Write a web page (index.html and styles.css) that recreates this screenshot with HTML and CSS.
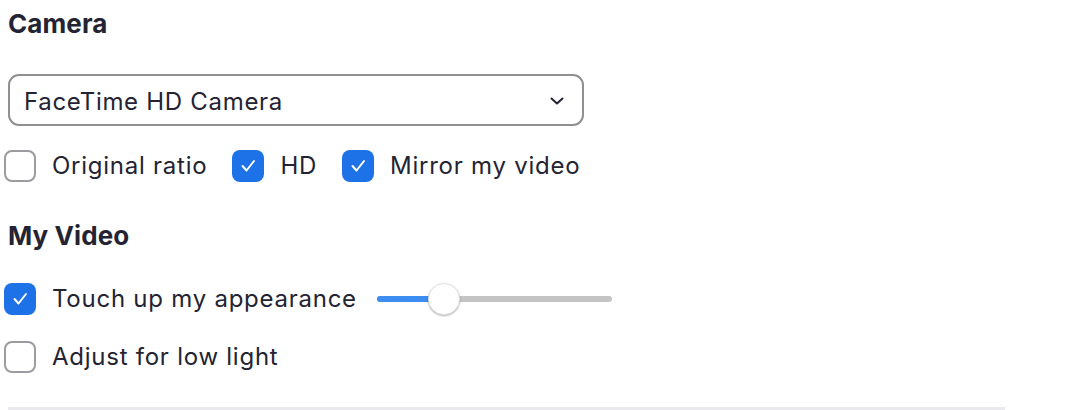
FILE: index.html
```html
<!DOCTYPE html>
<html lang="en">
<head>
  <meta charset="UTF-8" />
  <title>Video Settings</title>
  <link rel="stylesheet" href="styles.css">
</head>
<body>

  <div class="settings">
    <h2 class="section-title">Camera</h2>

    <div class="select">
      <span class="select-value">FaceTime HD Camera</span>
      <svg class="chevron" width="14" height="8" viewBox="0 0 14 8">
        <path d="M1.5 1.5 L7 6.5 L12.5 1.5" fill="none" stroke="#232333" stroke-width="2" stroke-linecap="round" stroke-linejoin="round"/>
      </svg>
    </div>

    <div class="check-row">
      <label class="check">
        <span class="box"></span>
        <span class="check-label">Original ratio</span>
      </label>
      <label class="check">
        <span class="box checked">
          <svg width="32" height="32" viewBox="0 0 32 32"><path d="M10.5 16 L14.5 20.5 L22 11" fill="none" stroke="#fff" stroke-width="2" stroke-linecap="round" stroke-linejoin="round"/></svg>
        </span>
        <span class="check-label">HD</span>
      </label>
      <label class="check">
        <span class="box checked">
          <svg width="32" height="32" viewBox="0 0 32 32"><path d="M10.5 16 L14.5 20.5 L22 11" fill="none" stroke="#fff" stroke-width="2" stroke-linecap="round" stroke-linejoin="round"/></svg>
        </span>
        <span class="check-label">Mirror my video</span>
      </label>
    </div>

    <h2 class="section-title my-video">My Video</h2>

    <div class="check-row touch-row">
      <label class="check">
        <span class="box checked">
          <svg width="32" height="32" viewBox="0 0 32 32"><path d="M10.5 16 L14.5 20.5 L22 11" fill="none" stroke="#fff" stroke-width="2" stroke-linecap="round" stroke-linejoin="round"/></svg>
        </span>
        <span class="check-label">Touch up my appearance</span>
      </label>
      <div class="slider">
        <div class="slider-fill" style="width: 28.5%"></div>
        <div class="slider-thumb" style="left: 28.5%"></div>
      </div>
    </div>

    <div class="check-row low-light-row">
      <label class="check">
        <span class="box"></span>
        <span class="check-label">Adjust for low light</span>
      </label>
    </div>

    <div class="divider"></div>
  </div>

</body>
</html>
```

FILE: styles.css
```css
body {
  margin: 0;
  background-color: #fff;
  color: #232333;
  font-family: Inter, 'Liberation Sans', sans-serif;
}

.settings {
  padding: 8px 0 0 8px;
}

.section-title {
  margin: 0;
  font-size: 26px;
  font-weight: 700;
  line-height: 32px;
  letter-spacing: 0.1px;
  color: #232333;
}

.select {
  margin-top: 34px;
  width: 576px;
  height: 52px;
  box-sizing: border-box;
  border: 2px solid #8f8f94;
  border-radius: 11px;
  padding: 2px 18px 0 14px;
  display: flex;
  align-items: center;
  justify-content: space-between;
}

.select-value {
  font-size: 24px;
  letter-spacing: 0.7px;
}

.check-row {
  margin-top: 24px;
  margin-left: -4px;
  display: flex;
  align-items: center;
  gap: 25px;
  height: 32px;
}

.check {
  display: flex;
  align-items: center;
  gap: 16px;
}

.box {
  width: 32px;
  height: 32px;
  box-sizing: border-box;
  border: 2px solid #9c9ca0;
  border-radius: 8px;
  display: flex;
}

.box.checked {
  border: none;
  background-color: #1d72e8;
}

.check-label {
  font-size: 24px;
  letter-spacing: 0.75px;
  line-height: 32px;
}

.my-video {
  margin-top: 38px;
}

.touch-row {
  margin-top: 31px;
  gap: 20px;
}

.low-light-row {
  margin-top: 26px;
}

.slider {
  position: relative;
  width: 235px;
  height: 6px;
  border-radius: 3px;
  background-color: #c4c4c4;
}

.slider-fill {
  height: 6px;
  border-radius: 3px;
  background-color: #3d8cf2;
}

.slider-thumb {
  position: absolute;
  top: -13px;
  width: 32px;
  height: 32px;
  margin-left: -16px;
  box-sizing: border-box;
  border-radius: 50%;
  background-color: #fff;
  border: 1px solid #e2e2e4;
  box-shadow: 0 1px 2px rgba(0, 0, 0, 0.3);
}

.divider {
  margin-top: 34px;
  width: 997px;
  height: 3px;
  background-color: #e9e9ee;
}
```
